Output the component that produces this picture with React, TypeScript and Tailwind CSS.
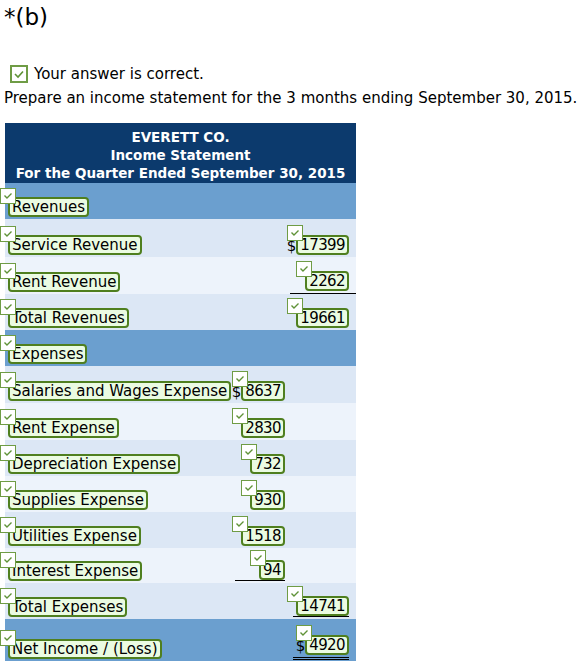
import React from "react";

const MiniCheck = ({ x = -8, y = -9 }: { x?: number; y?: number }) => (
  <span
    className="absolute z-10 w-[16px] h-[16px] bg-white border border-[#6f9c45] flex items-center justify-center"
    style={{ left: x, top: y }}
  >
    <svg width="14" height="14" viewBox="0 0 14 14">
      <path d="M3.5 6.5 L6 9 L10.5 4.5" fill="none" stroke="#5f9237" strokeWidth="1.4" />
    </svg>
  </span>
);

const Box = ({ children, cx = -8, cy = -9, num = false }: { children: React.ReactNode; cx?: number; cy?: number; num?: boolean }) => (
  <span className="relative inline-flex">
    <span
      className={`h-[20px] px-[2px] border-2 border-[#4f7f1f] rounded-[4px] bg-[#ebfbe2] text-[15px] leading-[16px] text-black whitespace-nowrap ${num ? "tracking-[-0.6px]" : ""}`}
    >
      {children}
    </span>
    <MiniCheck x={cx} y={cy} />
  </span>
);

type Row = {
  label: string;
  bg: string;
  h: string;
  c2?: { v: string; d?: boolean; u?: boolean };
  c3?: { v: string; d?: boolean; u?: boolean; dbl?: boolean };
  c3border?: boolean;
};

const rows: Row[] = [
  { label: "Revenues", bg: "bg-[#6b9fcf]", h: "h-[36px]" },
  { label: "Service Revenue", bg: "bg-[#dce7f5]", h: "h-[38px]", c3: { v: "17399", d: true } },
  { label: "Rent Revenue", bg: "bg-[#edf3fb]", h: "h-[37px]", c3: { v: "2262" }, c3border: true },
  { label: "Total Revenues", bg: "bg-[#dce7f5]", h: "h-[36px]", c3: { v: "19661" } },
  { label: "Expenses", bg: "bg-[#6b9fcf]", h: "h-[36px]" },
  { label: "Salaries and Wages Expense", bg: "bg-[#dce7f5]", h: "h-[37px]", c2: { v: "8637", d: true } },
  { label: "Rent Expense", bg: "bg-[#edf3fb]", h: "h-[37px]", c2: { v: "2830" } },
  { label: "Depreciation Expense", bg: "bg-[#dce7f5]", h: "h-[36px]", c2: { v: "732" } },
  { label: "Supplies Expense", bg: "bg-[#edf3fb]", h: "h-[36px]", c2: { v: "930" } },
  { label: "Utilities Expense", bg: "bg-[#dce7f5]", h: "h-[36px]", c2: { v: "1518" } },
  { label: "Interest Expense", bg: "bg-[#edf3fb]", h: "h-[35px]", c2: { v: "94", u: true } },
  { label: "Total Expenses", bg: "bg-[#dce7f5]", h: "h-[36px]", c3: { v: "14741", u: true } },
  { label: "Net Income / (Loss)", bg: "bg-[#6b9fcf]", h: "h-[42px]", c3: { v: "4920", d: true, dbl: true } },
];

export default function App() {
  return (
    <div className="w-[584px] h-[666px] bg-white text-black overflow-hidden" style={{ fontFamily: '"DejaVu Sans", Verdana, sans-serif' }}>
      <div className="pl-[4px] pt-[2px] text-[23px] leading-[30px]">*(b)</div>
      <div className="h-[32px]" />
      <div className="flex items-center pl-[10px] h-[20px]">
        <span className="w-[18px] h-[18px] border-2 border-[#6f9c45] bg-white flex items-center justify-center">
          <svg width="14" height="14" viewBox="0 0 14 14">
            <path d="M3 7 L6 10 L11 4.5" fill="none" stroke="#5f9237" strokeWidth="1.6" />
          </svg>
        </span>
        <span className="ml-[6px] text-[15px]">Your answer is correct.</span>
      </div>
      <div className="pl-[4px] mt-[3px] text-[15px] leading-[22px] whitespace-nowrap">
        Prepare an income statement for the 3 months ending September 30, 2015.
      </div>
      <div className="ml-[5px] mt-[14px] w-[351px]">
        <div className="bg-[#0c3a6d] text-white font-bold text-center text-[13.5px] leading-[18px] pt-[5px] pb-[1px]">
          <div>EVERETT CO.</div>
          <div>Income Statement</div>
          <div>For the Quarter Ended September 30, 2015</div>
        </div>
        {rows.map((r) => (
          <div key={r.label} className={`grid grid-cols-[227px_58px_66px] ${r.bg} ${r.h}`}>
            <div className="flex items-end pl-[3px] pb-[2px]">
              <Box>{r.label}</Box>
            </div>
            <div className="flex items-end justify-end pr-[5px] pb-[2px]">
              {r.c2 && (
                <span className={`flex items-end justify-end w-[50px] ${r.c2.u ? "border-b border-black" : ""}`}>
                  {r.c2.d && <span className="text-[15px] leading-[18px]">$</span>}
                  <Box num cx={-9} cy={-10}>{r.c2.v}</Box>
                </span>
              )}
            </div>
            <div className={`flex items-end justify-end pr-[7px] ${r.c3border ? "border-b border-black" : ""} ${r.c3?.dbl ? "pb-[1px]" : "pb-[2px]"}`}>
              {r.c3 && (
                <span
                  className={`flex items-end justify-end w-[56px] ${r.c3.u ? "border-b border-black" : ""} ${r.c3.dbl ? "border-b-[3px] border-double border-black pb-[2px]" : ""}`}
                >
                  {r.c3.d && <span className="text-[15px] leading-[18px]">$</span>}
                  <Box num cx={-9} cy={-10}>{r.c3.v}</Box>
                </span>
              )}
            </div>
          </div>
        ))}
      </div>
    </div>
  );
}
